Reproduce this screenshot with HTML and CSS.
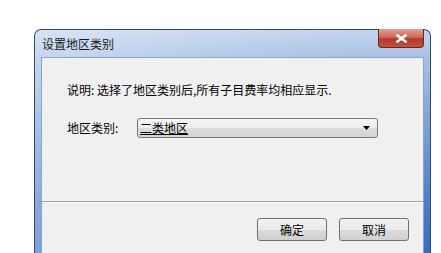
FILE: index.html
```html
<!DOCTYPE html>
<html lang="zh-CN">
<head>
<meta charset="utf-8">
<title>设置地区类别</title>
<link rel="stylesheet" href="styles.css">
</head>
<body>
<div class="window">
  <div class="titlebar">
    <span class="title">设置地区类别</span>
    <div class="close">
      <svg width="11" height="9" viewBox="0 0 11 9"><path d="M1.5 1.5 L9.5 7.5 M9.5 1.5 L1.5 7.5" stroke="#ffffff" stroke-width="2.6" stroke-linecap="square"/></svg>
    </div>
  </div>
  <div class="client">
    <div class="content">
      <p class="desc">说明: 选择了地区类别后,所有子目费率均相应显示.</p>
      <div class="row">
        <span class="label">地区类别:</span>
        <div class="select">
          <span class="value">二类地区</span>
          <svg class="arrow" width="7" height="4" viewBox="0 0 7 4"><path d="M0 0 H7 L3.5 4 Z" fill="#000"/></svg>
        </div>
      </div>
    </div>
    <div class="separator"></div>
    <div class="footer">
      <button class="btn">确定</button>
      <button class="btn">取消</button>
    </div>
  </div>
</div>
</body>
</html>
```
FILE: styles.css
```css
html, body {
  margin: 0;
  padding: 0;
  background: #ffffff;
  overflow: hidden;
  height: 253px;
}
body {
  font-family: "Noto Sans CJK SC", "Liberation Sans", sans-serif;
  font-size: 12px;
  color: #000;
}
.window {
  margin: 29px 0 0 34px;
  width: 383px;
  height: 223px;
  padding: 0 6px;
  border: 1px solid #34496a;
  border-bottom: none;
  border-radius: 7px 7px 0 0;
  background:
    linear-gradient(90deg, rgba(255,255,255,0.35) 0%, rgba(255,255,255,0.12) 50%, rgba(255,255,255,0) 80%),
    linear-gradient(180deg, #c3d5ed 0px, #a6c0e4 30px, #7ea4da 90px, #4d7ecb 170px, #3a6cc2 223px);
  display: flex;
  flex-direction: column;
}
.titlebar {
  height: 27px;
  display: flex;
  align-items: flex-start;
}
.title {
  margin-left: 1px;
  margin-top: 7px;
  line-height: 14px;
  color: #1a1a1a;
}
.close {
  margin-left: auto;
  margin-top: -1px;
  width: 44px;
  height: 18px;
  border: 1px solid #5b2b26;
  border-top: none;
  border-radius: 0 0 4px 4px;
  background: linear-gradient(180deg, #e2a092 0%, #cf6a58 45%, #b33a2c 55%, #c4513e 100%);
  display: flex;
  align-items: center;
  justify-content: center;
}
.client {
  flex: 1;
  background: #f0f0f0;
  border: 1px solid #8aa4ca;
  border-bottom: none;
  display: flex;
  flex-direction: column;
}
.content {
  padding: 24px 0 0 25px;
  height: 119px;
}
.desc {
  margin: 0;
  line-height: 16px;
}
.row {
  margin-top: 20px;
  display: flex;
  align-items: center;
}
.label {
  width: 70px;
  line-height: 16px;
}
.select {
  box-sizing: border-box;
  width: 241px;
  height: 20px;
  border: 1px solid #7a7a7a;
  border-radius: 3px;
  background: linear-gradient(180deg, #f4f4f4 0%, #ececec 50%, #dddddd 51%, #d3d3d3 100%);
  display: flex;
  align-items: center;
  padding: 0 7px 0 2px;
}
.value {
  line-height: 14px;
  text-decoration: underline;
  text-underline-offset: 1px;
}
.arrow {
  margin-left: auto;
}
.separator {
  height: 1px;
  background: #a0a0a0;
  border-bottom: 1px solid #fbfbfb;
}
.footer {
  display: flex;
  justify-content: flex-end;
  gap: 12px;
  padding: 15px 14px 0 0;
}
.btn {
  width: 70px;
  height: 23px;
  margin: 0;
  padding: 0;
  font-family: "Noto Sans CJK SC", "Liberation Sans", sans-serif;
  font-size: 12px;
  color: #000;
  border: 1px solid #707070;
  border-radius: 3px;
  background: linear-gradient(180deg, #f2f2f2 0%, #ebebeb 50%, #dddddd 51%, #cfcfcf 100%);
}
```
